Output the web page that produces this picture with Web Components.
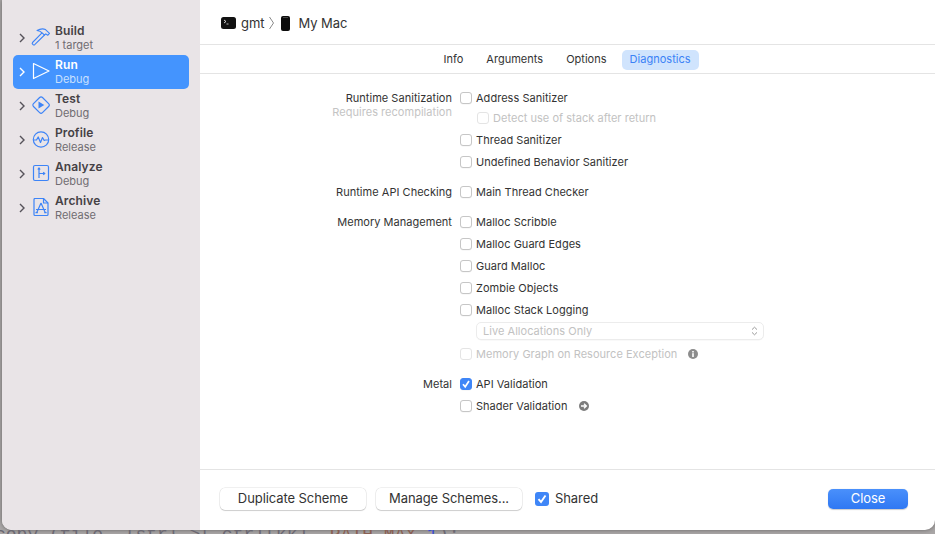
<!DOCTYPE html>
<html><head><meta charset="utf-8"><style>
html,body{margin:0;height:100%;overflow:hidden;background:#8f8f8f}
body{font-family:Inter,"Liberation Sans",sans-serif}
</style></head><body>
<scheme-app>
  <scheme-sidebar slot="side">
    <scheme-item name="Build" sub="1 target" icon="build"></scheme-item>
    <scheme-item name="Run" sub="Debug" icon="run" selected></scheme-item>
    <scheme-item name="Test" sub="Debug" icon="test"></scheme-item>
    <scheme-item name="Profile" sub="Release" icon="profile"></scheme-item>
    <scheme-item name="Analyze" sub="Debug" icon="analyze"></scheme-item>
    <scheme-item name="Archive" sub="Release" icon="archive"></scheme-item>
  </scheme-sidebar>
  <scheme-header slot="head"></scheme-header>
  <scheme-tabs slot="tabs"></scheme-tabs>
  <div slot="form">
    <form-group label="Runtime Sanitization" note="Requires recompilation">
      <form-check>Address Sanitizer</form-check>
      <form-check sub disabled style="margin-top:-2px">Detect use of stack after return</form-check>
      <form-check>Thread Sanitizer</form-check>
      <form-check>Undefined Behavior Sanitizer</form-check>
    </form-group>
    <form-group label="Runtime API Checking">
      <form-check>Main Thread Checker</form-check>
    </form-group>
    <form-group label="Memory Management">
      <form-check>Malloc Scribble</form-check>
      <form-check>Malloc Guard Edges</form-check>
      <form-check>Guard Malloc</form-check>
      <form-check>Zombie Objects</form-check>
      <form-check>Malloc Stack Logging</form-check>
      <form-select>Live Allocations Only</form-select>
      <form-check disabled after="info" style="margin-top:2px">Memory Graph on Resource Exception</form-check>
    </form-group>
    <form-group label="Metal">
      <form-check checked>API Validation</form-check>
      <form-check after="arrow">Shader Validation</form-check>
    </form-group>
  </div>
  <scheme-footer slot="foot"></scheme-footer>
</scheme-app>
<script>
function def(name, css, html){
  customElements.define(name, class extends HTMLElement{
    connectedCallback(){
      if(this.shadowRoot) return;
      const r=this.attachShadow({mode:'open'});
      r.innerHTML='<style>'+css+'</style>'+(typeof html==='function'?html(this):html);
    }
  });
}
const BLUE='#3d84f7';
const ICONS={
 build:c=>`<svg width="20" height="20" viewBox="0 0 20 20" fill="none" stroke="${c}" stroke-width="1.100" stroke-linejoin="round" stroke-linecap="round"><path d="M7 2.500C10 .8 13.500 .6 15.500 1.600L19.500 5.300 17.700 7.300 15.800 5.900 14.500 7 12 4.800C11 3.500 9 2.800 7 2.500Z"/><path d="M12 4.800 2.500 14.500c-.5.6-.4 1.100 0 1.500l.7.700c.5.400 1 .4 1.500 0L14.500 7"/></svg>`,
 run:c=>`<svg width="20" height="20" viewBox="0 0 20 20" fill="none" stroke="${c}" stroke-width="1.200" stroke-linejoin="round"><path d="M3.500 1.500 19 9 3.500 16.500z"/></svg>`,
 test:c=>`<svg width="20" height="20" viewBox="-.7 1.300 20 20" fill="none" stroke="${c}" stroke-width="1.200"><rect x="4" y="4" width="12.700" height="12.700" rx="2" transform="rotate(45 10.350 10.350)"/><path d="M7.800 6.700l5.800 3.600-5.800 3.600z" fill="${c}" stroke="none"/></svg>`,
 profile:c=>`<svg width="20" height="20" viewBox="-1 .5 20 20" fill="none" stroke="${c}" stroke-width="1.200"><circle cx="10" cy="10" r="7.700"/><path d="M3 10.500h2.500l1.700-3 2.300 5.500 2-5 1.700 3 1.300-.5H17" stroke-linejoin="round"/></svg>`,
 analyze:c=>`<svg width="20" height="20" viewBox="-1 1 20 20" fill="none" stroke="${c}" stroke-width="1.200"><rect x="2.500" y="2.500" width="15" height="15" rx="1.500"/><path d="M8 5.500v9.500M8 10.500h5.500M6.800 6.500 8 5l1.200 1.500M12.200 9.200l1.500 1.300-1.500 1.300"/></svg>`,
 archive:c=>`<svg width="20" height="20" viewBox="-1 1 20 20" fill="none" stroke="${c}" stroke-width="1.200" stroke-linejoin="round"><path d="M4 1.500h8.500L17 6v11.500c0 .6-.4 1-1 1H4c-.6 0-1-.4-1-1v-15c0-.6.4-1 1-1z"/><path d="M12.500 1.500V6H17"/><path d="M10 6 5.800 15.500M10 6l4.200 9.500M5 12.500h10M4.500 15.700h2.400M13.200 15.700h2.400" /></svg>`
};
def('scheme-app',`
:host{display:block;height:534px;overflow:hidden;background:#a9a6a6}
.win{box-sizing:border-box;margin-left:2px;height:530px;display:flex;background:#fff;border-radius:0 0 10px 10px;overflow:hidden;box-shadow:0 0 4px rgba(0,0,0,.4)}
.side{width:198px;flex:none;background:#e9e4e7}
.main{flex:1;min-width:0;display:flex;flex-direction:column}
.form{flex:1;padding-top:13px;box-sizing:border-box}
.peek{font:18px/20px "Liberation Mono",monospace;color:#6b6872;height:4px;overflow:hidden;margin-left:-5px;white-space:pre}
.peek span{display:block;margin-top:-5px}
em{font-style:normal}
.b{color:#8a5f52}.n{color:#3a4fd0}
`,`<div class="win"><div class="side"><slot name="side"></slot></div><div class="main"><slot name="head"></slot><slot name="tabs"></slot><div class="form"><slot name="form"></slot></div><slot name="foot"></slot></div></div><div class="peek"><span>copy (file, {str} &gt;[ ctrl[kk], <em class="b">PATH_MAX</em> <em class="n">1</em>);</span></div>`);
def('scheme-sidebar',`:host{display:block;padding:21px 11px 0}`,`<slot></slot>`);
def('scheme-item',`
:host{display:flex;height:34px;align-items:center;border-radius:5px;color:#454145}
:host([selected]){background:#4494fe;color:#fff}
.chev{width:6px;height:10px;margin-left:6px;margin-right:5px;flex:none}
.ic{width:20px;height:20px;flex:none;margin-right:5px}
.t{display:flex;flex-direction:column}
b{font-size:12px;font-weight:600;line-height:15px;letter-spacing:.1px;margin-top:-1px}
span{font-size:11px;line-height:14px;color:#706c71}
:host([selected]) span{color:#c9e0ff}
`,h=>{const sel=h.hasAttribute('selected');const c=sel?'#fff':BLUE;return `<svg class="chev" viewBox="0 0 6 10" fill="none" stroke="${sel?'#fff':'#56525a'}" stroke-width="1.400"><path d="M1 1l4 4-4 4"/></svg><div class="ic">${ICONS[h.getAttribute('icon')](c)}</div><div class="t"><b>${h.getAttribute('name')}</b><span>${h.getAttribute('sub')}</span></div>`});
def('scheme-header',`
:host{display:flex;align-items:center;border-bottom:1px solid #e4e4e4;padding:2px 0 0 21px;height:42px;font-size:13px;color:#333;letter-spacing:-.05px}
.gmt{margin:0 5px}
.chev{margin-right:7px}
.my{margin-left:8px}
`,`<svg width="15" height="12" viewBox="0 0 15 12"><rect width="15" height="12" rx="2.500" fill="#111"/><path d="M3 3l2 1.500L3 6" fill="none" stroke="#fff" stroke-width=".8"/><path d="M5.500 7h2" stroke="#fff" stroke-width=".7"/></svg><span class="gmt">gmt</span><svg class="chev" width="5" height="14" viewBox="0 0 5 14" fill="none" stroke="#8a8a8a"><path d="M.5 1 4.500 7 .5 13"/></svg><svg width="9" height="15" viewBox="0 0 9 15"><rect width="9" height="15" rx="2" fill="#0c0c0c"/><rect x="2" y="1" width="5" height=".8" fill="#555"/></svg><span class="my">My Mac</span>`);
def('scheme-tabs',`
:host{display:flex;justify-content:center;align-items:center;gap:7px;height:27px;padding:1px 1px 0 0;border-bottom:1px solid #e4e4e4;font-size:11px;color:#333}
span{display:block;padding:0 8px;height:20px;line-height:19px;border-radius:5px;letter-spacing:.02px}
.on{background:#d0e4fd;color:#3a82f6}
`,`<span>Info</span><span>Arguments</span><span>Options</span><span class="on">Diagnostics</span>`);
def('form-group',`
:host{display:flex;gap:8px;margin-bottom:8px}
.l{width:252px;flex:none;text-align:right;font-size:11px;color:#333;letter-spacing:.03px}
.a{line-height:22px;height:22px;display:block}
.n{display:block;color:#c4c4c4;line-height:14px;margin-top:-4px}
.r{display:flex;flex-direction:column;flex:1}
`,h=>`<div class="l"><span class="a">${h.getAttribute('label')}</span>${h.hasAttribute('note')?`<span class="n">${h.getAttribute('note')}</span>`:''}</div><div class="r"><slot></slot></div>`);
def('form-check',`
:host{display:flex;align-items:center;height:22px;font-size:11px;color:#333;letter-spacing:.03px}
:host([sub]){margin-left:17px}
:host([disabled]){color:#c2c2c2}
i{display:flex;box-sizing:border-box;width:12px;height:12px;margin-right:4px;border:1px solid #c6c6c6;border-radius:3px;background:#fff;box-shadow:0 .5px 0 rgba(0,0,0,.06);flex:none;align-items:center;justify-content:center}
:host([disabled]) i{border-color:#e4e4e4;box-shadow:none}
:host([checked]) i{background:#3f86f7;border-color:#3f86f7}
.after{margin-left:11px;display:block}
.arrow{margin-left:12px}
`,h=>`<i>${h.hasAttribute('checked')?'<svg width="10" height="10" viewBox="0 0 10 10" fill="none" stroke="#fff" stroke-width="1.700"><path d="M2 5.200 4.200 7.800 8 2"/></svg>':''}</i><span><slot></slot></span>${h.getAttribute('after')==='info'?'<svg class="after" width="10" height="10" viewBox="0 0 10 10"><circle cx="5" cy="5" r="5" fill="#8c8c8c"/><rect x="4.200" y="4.200" width="1.600" height="3.800" fill="#fff"/><rect x="4.200" y="2" width="1.600" height="1.500" fill="#fff"/></svg>':h.getAttribute('after')==='arrow'?'<svg class="after arrow" width="10" height="10" viewBox="0 0 10 10"><circle cx="5" cy="5" r="5" fill="#7d7d7d"/><path d="M2 5h5M5 2.800 7.400 5 5 7.200" fill="none" stroke="#fff" stroke-width="1.300"/></svg>':''}`);
def('form-select',`
:host{display:flex;align-items:center;justify-content:space-between;box-sizing:border-box;width:288px;height:18px;margin:1px 0 1px 16px;padding:0 5px 0 6px;border:1px solid #ececec;border-radius:5px;font-size:11px;color:#c2c2c2;letter-spacing:.03px;box-shadow:0 .5px 0 rgba(0,0,0,.05)}
`,`<span><slot></slot></span><svg width="7" height="10" viewBox="0 0 7 10" fill="none" stroke="#9a9a9a" stroke-width="1"><path d="M1 3.600 3.500 1.200 6 3.600M1 6.400 3.500 8.800 6 6.400"/></svg>`);
def('scheme-footer',`
:host{display:flex;align-items:center;height:58px;padding:0 27px 2px 20px;border-top:1px solid #e4e4e4;font-size:13px;color:#333;letter-spacing:-.08px}
button{font:inherit;color:inherit;letter-spacing:inherit;width:146px;height:22px;padding:0 0 2px;margin:0 10px 0 0;border:0;border-radius:5px;background:#fff;box-shadow:0 0 0 .5px rgba(0,0,0,.12),0 1px 1px rgba(0,0,0,.14)}
.c{margin-left:3px;margin-right:6px;box-sizing:border-box;width:14px;height:14px;border-radius:3px;background:#3f86f7;display:flex;align-items:center;justify-content:center}
.s{margin-top:-2px}
.sp{flex:1}
.close{width:80px;height:20px;margin:0;background:linear-gradient(#4a90fb,#2f78f3);color:#fff;box-shadow:0 .5px 1px rgba(0,0,0,.2)}
`,`<button>Duplicate Scheme</button><button>Manage Schemes...</button><span class="c"><svg width="12" height="12" viewBox="0 0 12 12" fill="none" stroke="#fff" stroke-width="1.900"><path d="M2.500 6.200 5 9 9.500 2.500"/></svg></span><span class="s">Shared</span><span class="sp"></span><button class="close">Close</button>`);
</script>
</body></html>
